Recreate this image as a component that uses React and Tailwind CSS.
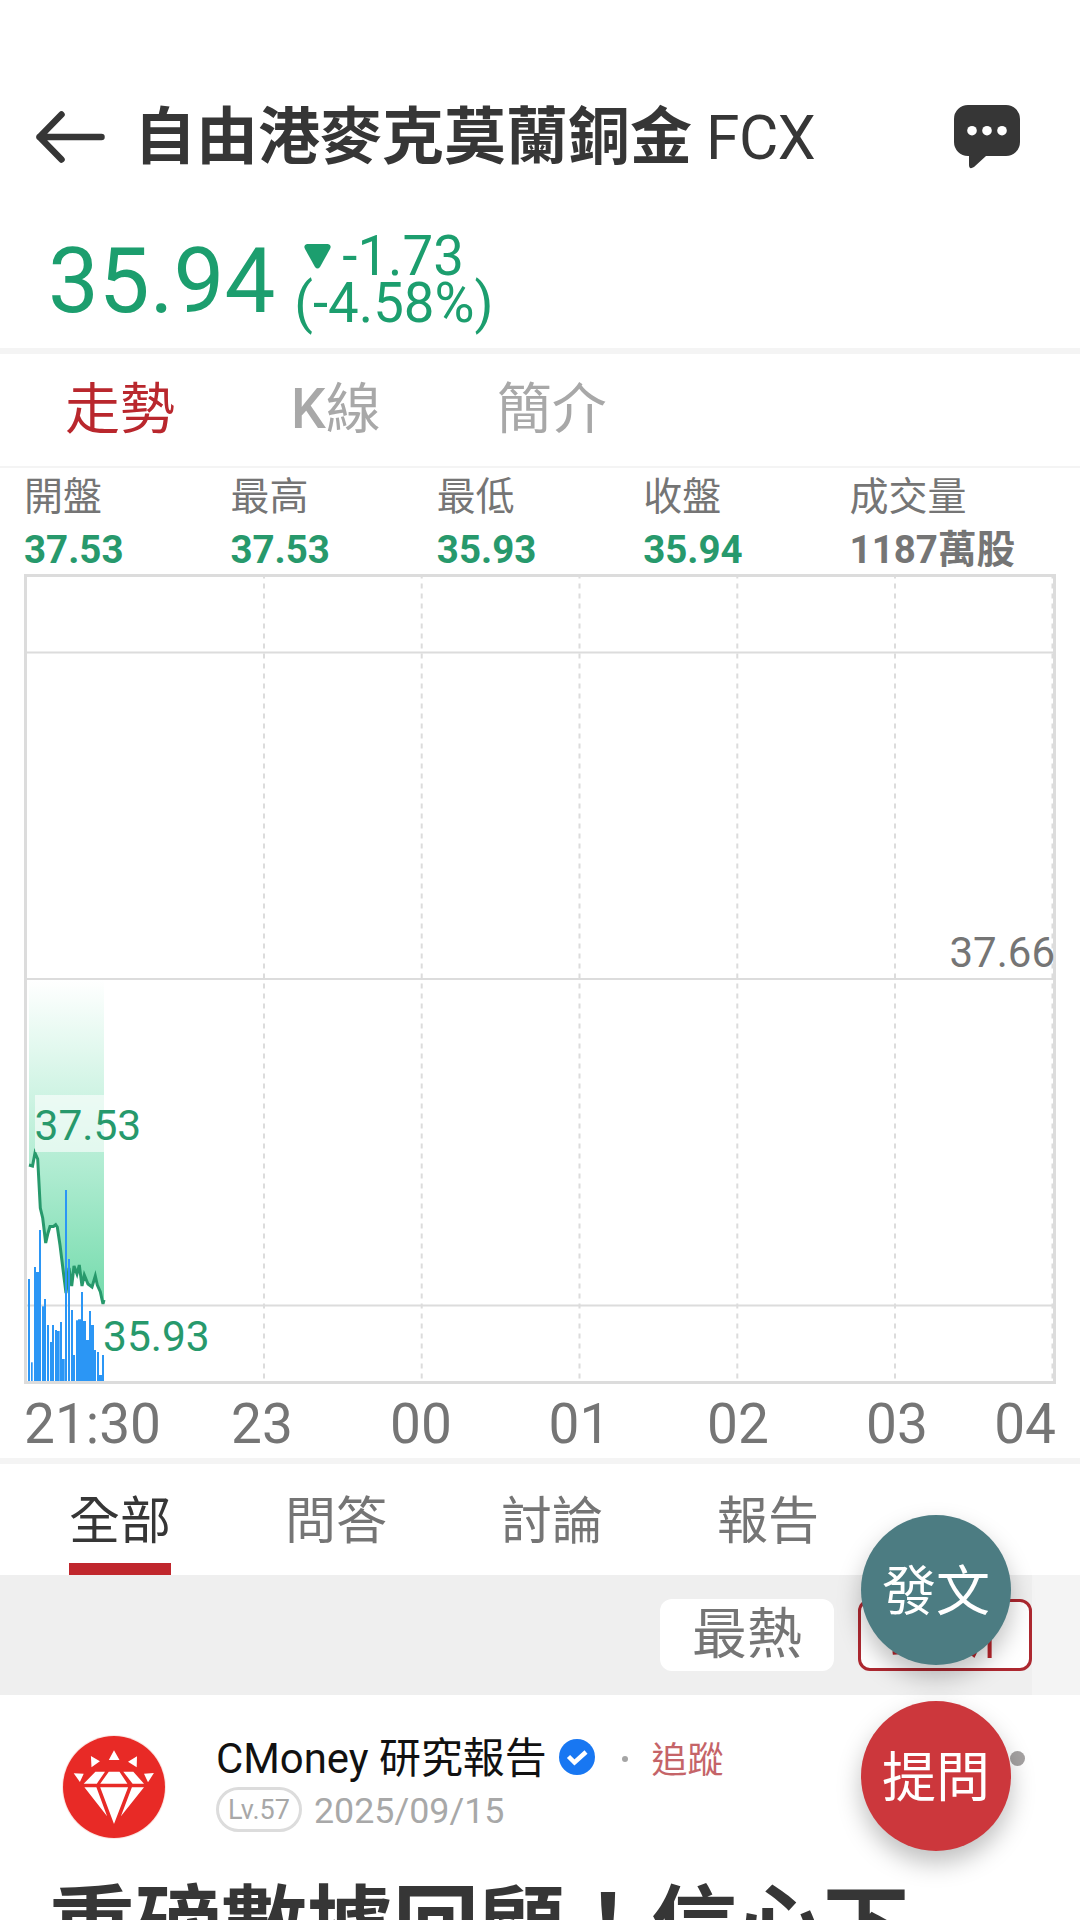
import React from "react";

const stats = [
    { label: "開盤", value: "37.53", down: true },
    { label: "最高", value: "37.53", down: true },
    { label: "最低", value: "35.93", down: true },
    { label: "收盤", value: "35.94", down: true },
    { label: "成交量", value: "1187萬股", down: false },
];

// [x, width, top] of every volume bar
const volumes = [
    [28, 2, 1279], [31, 1.7, 1362.3], [34, 2, 1267], [36, 3, 1272], [39, 2, 1230],
    [42, 2, 1306.3], [44, 2, 1299], [47, 2, 1325], [50, 2, 1342], [52, 2, 1325],
    [55, 2, 1330], [57, 2.7, 1331], [60, 2, 1322], [62, 2.7, 1359], [65, 2, 1190],
    [68, 2, 1259], [71, 2, 1310], [73, 2, 1355], [76, 2, 1320.3], [78, 3, 1319.3],
    [81, 2, 1292], [83, 3, 1321], [86, 3, 1340], [89, 2, 1311], [91, 3, 1325],
    [94, 2, 1350], [97, 2, 1352], [99, 3, 1375], [102, 2, 1355],
];

const prices = [
    [29, 1165], [32.5, 1166], [35, 1153], [37.7, 1159], [40.3, 1208], [42.7, 1218],
    [45.7, 1243], [48, 1233], [50, 1226.5], [53.5, 1226.5], [55.7, 1224.7], [57.3, 1227],
    [60, 1245], [63.3, 1271.7], [66, 1293], [69, 1268], [71.7, 1286], [74, 1266],
    [77, 1274], [79.3, 1265], [82, 1286], [84.3, 1275], [88, 1284], [92, 1287],
    [95.3, 1276], [97.3, 1285], [100.3, 1291.7], [103, 1304], [104, 1300],
];

const hours = [
    { x: 262, text: "23" },
    { x: 421, text: "00" },
    { x: 579.5, text: "01" },
    { x: 738, text: "02" },
    { x: 897, text: "03" },
];

const line = prices.map((p) => p.join(",")).join(" ");

const TrendChart = () => {
    return (
        <svg width="1080" height="884" viewBox="0 574 1080 884" className="block">
            <defs>
                <linearGradient id="fall" gradientUnits="userSpaceOnUse" x1="0" y1="980" x2="0" y2="1304">
                    <stop offset="0" stopColor="#ffffff" />
                    <stop offset="0.55" stopColor="#b4edd4" />
                    <stop offset="1" stopColor="#74dbac" />
                </linearGradient>
            </defs>
            <g stroke="#dcdcdc" strokeWidth="2">
                <path d="M27 652.5H1053M27 979H1053M27 1305.5H1053" />
                <path
                    d="M264 573.5V1381M421.7 573.5V1381M579.5 573.5V1381M737.3 573.5V1381M895 573.5V1381M1052.5 573.5V1381"
                    strokeDasharray="5 5"
                />
            </g>
            <rect x="25.5" y="575.5" width="1029" height="807" fill="none" stroke="#dcdcdc" strokeWidth="3" />
            <polygon points={`29,980 ${line} 104,980`} fill="url(#fall)" />
            <polyline points={line} fill="none" stroke="#27996c" strokeWidth="3" />
            <g fill="#2b96f5">
                {volumes.map(([x, width, top]) => (
                    <rect key={x} x={x} y={top} width={width} height={1381 - top} />
                ))}
            </g>
            <rect x="35" y="1095" width="106" height="57" fill="#ffffff" fillOpacity="0.6" />
            <g fontSize="42.5" fill="#27996c">
                <text x="34.5" y="1140">37.53</text>
                <text x="103" y="1351">35.93</text>
            </g>
            <text x="1055" y="967" fontSize="42" fill="#757575" textAnchor="end">37.66</text>
            <g fontSize="55" fill="#757575">
                <text x="24" y="1443">21:30</text>
                {hours.map((h) => (
                    <text key={h.text} x={h.x} y="1443" textAnchor="middle">{h.text}</text>
                ))}
                <text x="1056" y="1443" textAnchor="end">04</text>
            </g>
        </svg>
    );
};

const Avatar = () => {
    return (
        <svg width="104" height="104" viewBox="0 0 104 104">
            <circle cx="52" cy="52" r="52" fill="#fbe6e3" />
            <circle cx="52" cy="52" r="51" fill="#e82a26" />
            <g fill="#ffffff">
                <path d="M52 15.3L57.5 25H46.8ZM28.9 21L37.9 26.3L29.5 32.3ZM75 21.3L74.7 32.3L66 26.7ZM11.7 38.3L21.7 38.7L17.9 47ZM91.9 38L86 47.3L82 38.7Z" />
                <path d="M33.4 36.7H43L34.8 48.7H21.7ZM46.8 36.7H57.5L65.4 48.7H38.2ZM61.3 36.7H71.3L82 48.7H70.6Z" />
                <path d="M22.4 52.3H34.4L45.1 81.3ZM38.2 52.3H66.1L52 89ZM69.9 52.3H82L58.9 81.3Z" />
            </g>
        </svg>
    );
};

const App = () => {
    const tabs = ["全部", "問答", "討論", "報告"];
    return (
        <div className="relative w-[1080px] h-[1920px] overflow-hidden bg-white pt-16 text-[#363636] font-[Roboto,'Noto_Sans_CJK_TC',sans-serif]">
            <header className="flex items-center h-[148px] pl-9 pr-[60px]">
                <svg width="70" height="54" viewBox="0 0 70 54" className="mb-[3px]" fill="none" stroke="#363636" strokeWidth="6.500" strokeLinecap="round" strokeLinejoin="round">
                    <path d="M65.5 27H3.5M25.5 4.5L3.5 27L25.5 49.5" />
                </svg>
                <h1 className="flex-1 flex items-baseline gap-[14px] ml-7 text-[62px] leading-[72px] whitespace-nowrap">
                    <span className="font-bold">自由港麥克莫蘭銅金</span>
                    <span className="text-[60.5px] tracking-[-0.5px]">FCX</span>
                </h1>
                <svg width="66" height="64" viewBox="0 0 66 64" fill="#363636" className="mb-[2px]">
                    <path d="M14 0H52A14 14 0 0 1 66 14V37A14 14 0 0 1 52 51H32L20 62Q15 65 15 60V51H14A14 14 0 0 1 0 37V14A14 14 0 0 1 14 0Z" />
                    <g fill="#ffffff">
                        <circle cx="18" cy="25.7" r="4.8" />
                        <circle cx="33" cy="25.7" r="4.8" />
                        <circle cx="48" cy="25.7" r="4.8" />
                    </g>
                </svg>
            </header>

            <div className="flex items-center h-[136px] pl-12 text-[#1c9e6e]">
                <p className="pt-[3px] text-[90.5px] leading-none">35.94</p>
                <div className="ml-[19px] text-[54.6px] leading-[47px]">
                    <div className="flex items-center pl-[10px]">
                        <svg width="27" height="25" viewBox="0 0 27 25" fill="currentColor">
                            <path d="M3 0H24Q28 1 26 5L16 23Q13.500 26 11 23L1 5Q-1 1 3 0Z" />
                        </svg>
                        <span className="ml-[11px]">-1.73</span>
                    </div>
                    <p>(-4.58%)</p>
                </div>
            </div>

            <div className="h-[6px] bg-[#f4f4f4]"></div>

            <nav className="flex items-center gap-[116px] h-[114px] pl-[65px] pb-[2px] border-b-2 border-[#f4f4f4] text-[55px] leading-none text-[#a8a8a8]">
                <span className="text-[#b9272d]">走勢</span>
                <span><span className="font-medium">K</span>線</span>
                <span>簡介</span>
            </nav>

            <div className="grid grid-cols-5 px-6 pt-[2px] text-[38.5px]">
                {
                    stats.map((item) => (
                        <div key={item.label} className="whitespace-nowrap">
                            <p className="text-[39px] leading-[54px] text-[#757575]">{item.label}</p>
                            <p className={item.down ? "pt-[2px] leading-[48px] font-bold text-[#27996c]" : "pt-[2px] leading-[48px] font-bold text-[#757575]"}>{item.value}</p>
                        </div>
                    ))
                }
            </div>

            <TrendChart />

            <div className="h-[6px] bg-[#f4f4f4]"></div>

            <nav className="flex h-[111px] pl-3 text-[51px] leading-none text-[#757575]">
                {
                    tabs.map((tab, index) => (
                        <div key={tab} className="w-[216px] flex justify-center">
                            <span className={index === 0 ? "flex items-center pt-[15px] border-b-[12px] border-[#c0272d] text-[#363636]" : "flex items-center pt-[15px] border-b-[12px] border-transparent"}>
                                {tab}
                            </span>
                        </div>
                    ))
                }
            </nav>

            <div className="flex h-[120px] bg-[#f4f4f4]">
                <div className="flex items-center justify-end gap-6 w-[1032px] bg-[#efefef] text-[55px] leading-none">
                    <button className="w-[174px] h-[72px] pb-[2px] rounded-xl bg-white text-[#757575]">最熱</button>
                    <button className="w-[174px] h-[72px] pb-[2px] rounded-xl border-3 border-[#ad2830] bg-white text-[#b9272d]">最新</button>
                </div>
            </div>

            <article className="pt-10">
                <div className="flex pl-[62px]">
                    <Avatar />
                    <div className="ml-[50px]">
                        <div className="flex items-center h-[47px] text-[41.9px] leading-none text-[#111111]">
                            <span>CMoney 研究報告</span>
                            <svg width="36" height="36" viewBox="0 0 36 36" className="ml-[12px] mb-[3px]">
                                <circle cx="18" cy="18" r="18" fill="#1877f2" />
                                <path d="M9.500 17.500L15.500 23.500L27 13" fill="none" stroke="#ffffff" strokeWidth="4.500" />
                            </svg>
                            <span className="w-[6px] h-[6px] ml-[27px] rounded-full bg-[#a5a5a5]"></span>
                            <span className="pt-[4px] ml-6 text-[36px] text-[#c56468]">追蹤</span>
                            <div className="flex gap-[7px] ml-[242px]">
                                <span className="w-[15px] h-[15px] rounded-full bg-[#a5a2a2]"></span>
                                <span className="w-[15px] h-[15px] rounded-full bg-[#a5a2a2]"></span>
                                <span className="w-[15px] h-[15px] rounded-full bg-[#a5a2a2]"></span>
                            </div>
                        </div>
                        <div className="flex items-center mt-[5px] text-[#a8a8a8]">
                            <span className="flex items-center justify-center w-[86px] h-[45px] pt-[2px] rounded-full border-3 border-[#dcdcdc] text-[27px] leading-none">Lv.57</span>
                            <span className="pt-[5px] ml-3 text-[35.8px] leading-none">2025/09/15</span>
                        </div>
                    </div>
                </div>
                <h2 className="mt-[39px] pl-[49px] text-[86px] leading-[100px] font-bold whitespace-nowrap">重磅數據回顧！信心下</h2>
            </article>

            {/* floating actions */}
            <div className="absolute left-[861px] top-[1515px] flex flex-col gap-9 text-white text-[54px] leading-none">
                <button className="w-[150px] h-[150px] pt-[5px] rounded-full bg-[#4c7c82] shadow-[0_12px_24px_rgba(0,0,0,0.25)]">發文</button>
                <button className="w-[150px] h-[150px] pt-[5px] rounded-full bg-[#cc373c] shadow-[0_12px_24px_rgba(0,0,0,0.25)]">提問</button>
            </div>
        </div>
    );
};

export default App;
